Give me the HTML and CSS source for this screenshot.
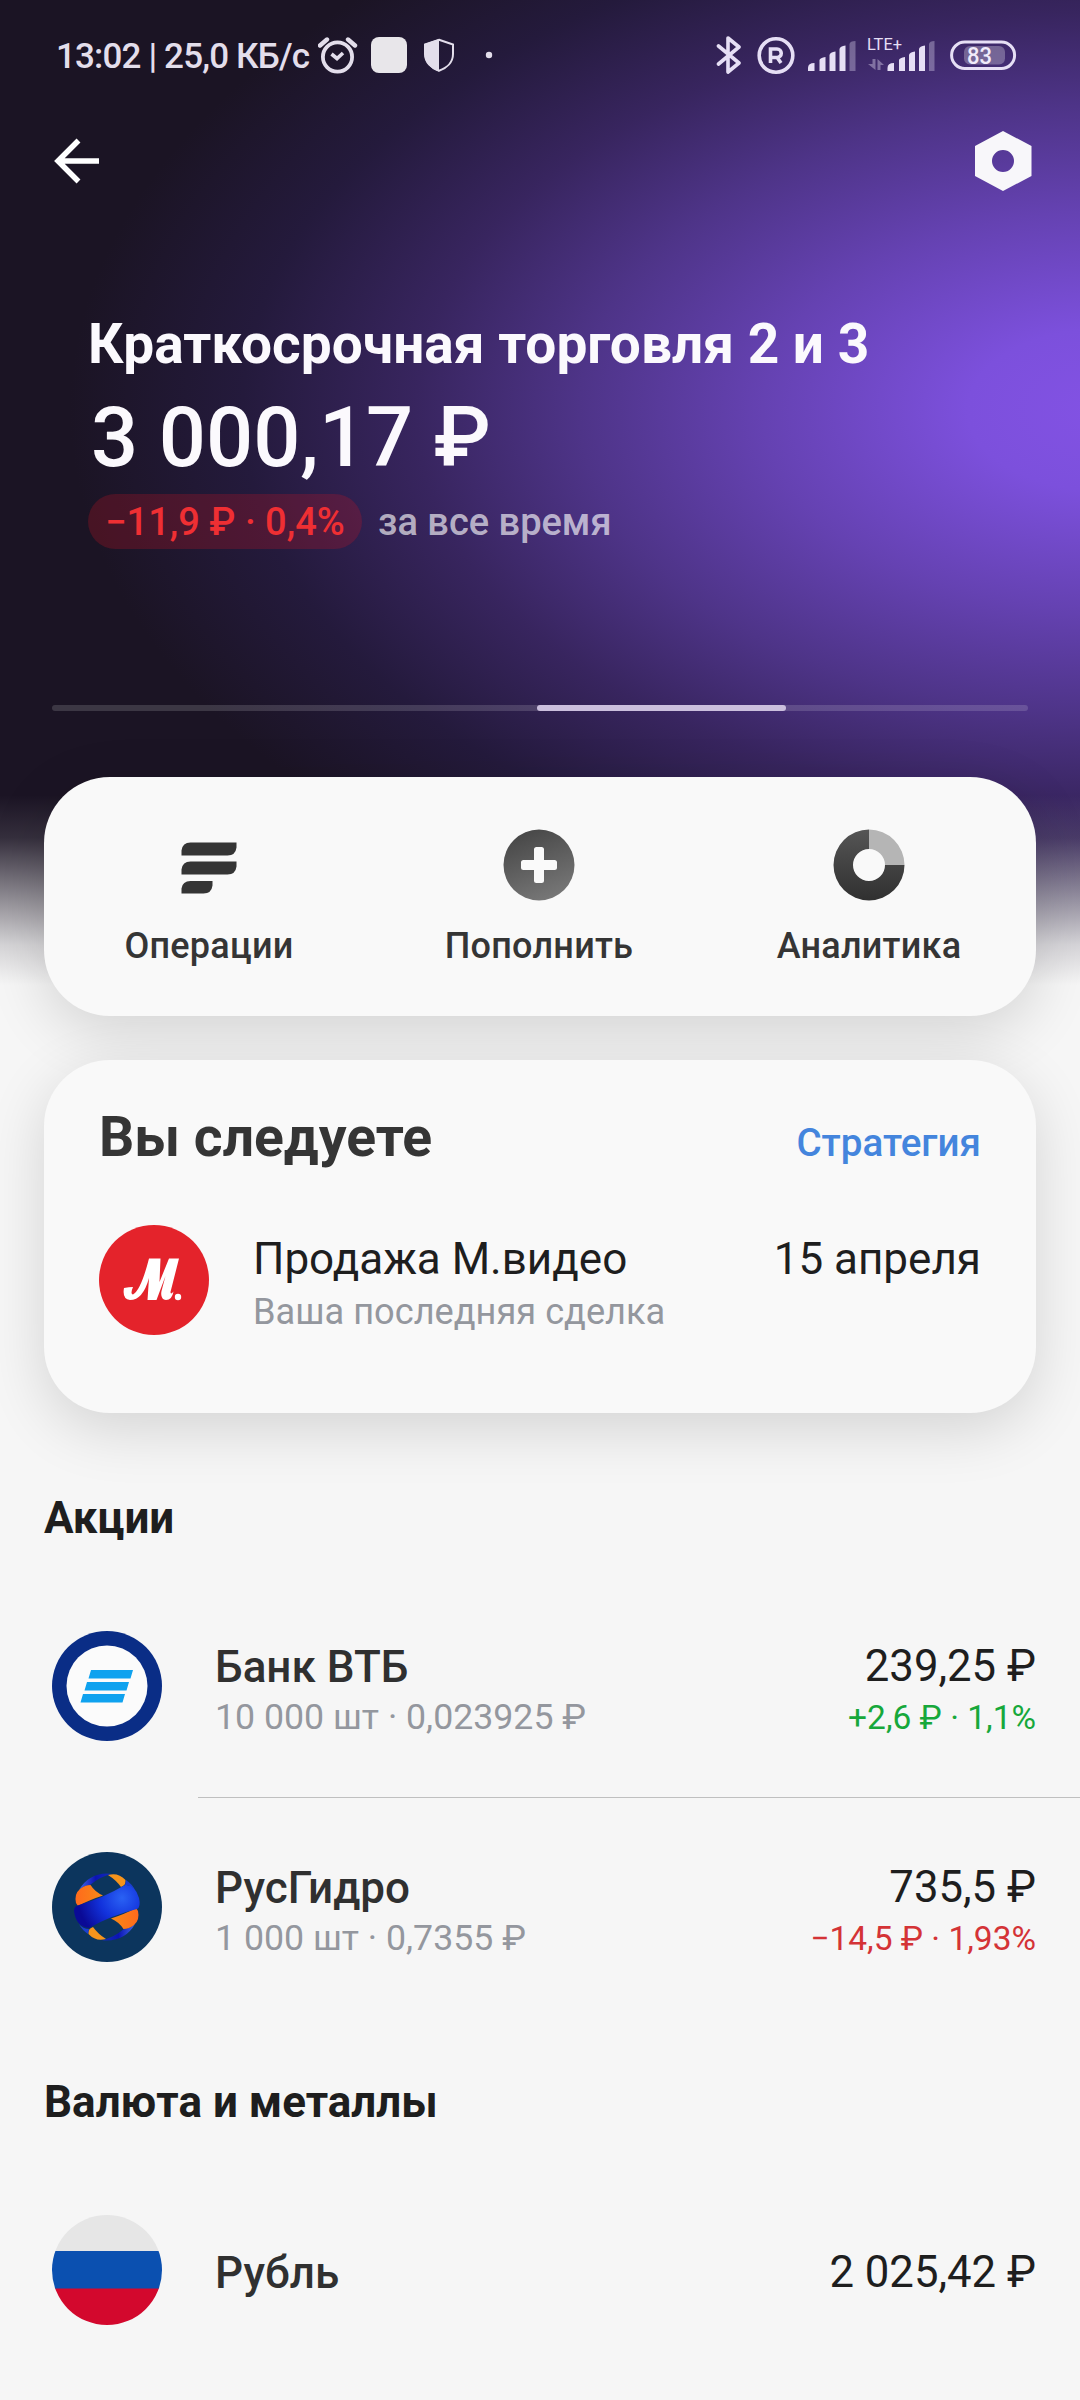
FILE: index.html
```
<!DOCTYPE html>
<html lang="ru">
<head>
<meta charset="utf-8">
<title>Портфель</title>
<link rel="stylesheet" href="styles.css">
</head>
<body>
<div class="screen">
  <header class="hero">
    <div class="statusbar">
      <span class="clock">13:02 | 25,0 КБ/с</span>
      <svg class="status-left" width="176" height="44" viewBox="318 33 176 44">
        <circle cx="337.500" cy="57" r="14.600" fill="none" stroke="#e3deeb" stroke-width="3.800"/>
        <path d="M320 45.500 L327 39.500 M355 45.500 L348 39.500" stroke="#e3deeb" stroke-width="4.400" stroke-linecap="round"/>
        <path d="M331.500 54 L337 58.500 L343 53" fill="none" stroke="#e3deeb" stroke-width="3.600"/>
        <rect x="371" y="37" width="36" height="36" rx="8" fill="#e8e6ea"/>
        <path d="M439 39.800 L453 44.500 V54 C453 62 447 68 439 70.800 C431 68 425 62 425 54 V44.500 Z" fill="none" stroke="#e3deeb" stroke-width="2"/>
        <path d="M439 39 L424.500 44 V54 C424.500 62.500 431 69 439 71.500 Z" fill="#e3deeb"/>
        <circle cx="489" cy="55" r="3.200" fill="#e3deeb"/>
      </svg>
      <svg class="status-right" width="302" height="44" viewBox="716 33 302 44">
        <g fill="none" stroke="#e6dff5" stroke-width="3.600" stroke-linejoin="round" stroke-linecap="round">
          <path d="M718.500 46 L739 63 L728 72 V38 L739 47 L718.500 64"/>
          <circle cx="776" cy="55.500" r="16.800"/>
          <path d="M770.500 63 V49 H777 A4 4 0 0 1 777 57.500 H771 M777.500 58 L781 63" stroke-linejoin="miter" stroke-linecap="butt"/>
          <rect x="951.600" y="42" width="63" height="26.500" rx="13.200" stroke-width="3"/>
        </g>
        <rect x="964" y="46" width="41" height="18.500" rx="6" fill="#fff" fill-opacity=".28"/>
        <g fill="#e6dff5">
          <path id="bars" d="M808 71 V68 Q808 63 814.500 63 V71 Z M819.500 71 V60 Q820 58 825.500 57 V71 Z M829.500 71 V55 Q830 52 835.500 51.500 V71 Z M839.500 71 V49 Q840 46 845.500 45.500 V71 Z"/>
          <path d="M849.500 71 V44 Q850 41 855.500 41 V71 Z" opacity=".35"/>
          <use href="#bars" x="79.500"/>
          <path d="M929 71 V44 Q929.500 41 934.500 41 V71 Z" opacity=".35"/>
          <path d="M872.500 59 H875.500 V70 L868 64 H872.500 Z M877.500 70 V59 L884 65 H880.500 V70 Z" opacity=".4"/>
        </g>
        <text x="867" y="50" class="lte" textLength="35" lengthAdjust="spacingAndGlyphs">LTE+</text>
        <text x="967" y="63.500" class="battery" textLength="25" lengthAdjust="spacingAndGlyphs">83</text>
      </svg>
    </div>
    <nav class="toolbar">
      <svg width="46" height="62" viewBox="54 130 46 62"><path d="M99 161 H58 M78.500 140.500 L58 161 L78.500 181.500" fill="none" stroke="#fff" stroke-width="5.500"/></svg>
      <svg width="58" height="62" viewBox="974 130 58 62"><path fill-rule="evenodd" fill="#f8f7fa" d="M1003 131 L1031.500 146 V176 L1003 191 L975 176 V146 Z M1003 150 A11 11 0 1 0 1003 172 A11 11 0 1 0 1003 150 Z"/></svg>
    </nav>
    <div class="summary">
      <h1>Краткосрочная торговля 2 и 3</h1>
      <div class="amount">3 000,17 ₽</div>
      <div class="change"><span class="pill">−11,9 ₽ · 0,4%</span><span class="period">за все время</span></div>
    </div>
    <div class="pager"><span class="pager-active"></span></div>
  </header>

  <section class="card actions">
    <div class="action">
      <svg width="72" height="72" viewBox="172.500 828.500 72 72" fill="#353535"><path d="M181 855 V850 Q182 842 190 842 H236 V847 Q235 855 227 855 Z M181 874 V869 Q182 861 190 861 H236 V866 Q235 874 227 874 Z M181 893 V888 Q182 880.500 190 880.500 H212 V885 Q211 893 203 893 Z"/></svg>
      <span>Операции</span>
    </div>
    <div class="action">
      <svg width="72" height="72" viewBox="0 0 72 72"><defs><linearGradient id="g1" x1=".2" y1="0" x2=".6" y2="1"><stop stop-color="#454545"/><stop offset="1" stop-color="#777"/></linearGradient></defs><circle cx="36" cy="36" r="35.500" fill="url(#g1)"/><path d="M33.500 18 H38.500 Q41 18 41 20.500 V31 H51.500 Q54 31 54 33.500 V38.500 Q54 41 51.500 41 H41 V51.500 Q41 54 38.500 54 H33.500 Q31 54 31 51.500 V41 H20.500 Q18 41 18 38.500 V33.500 Q18 31 20.500 31 H31 V20.500 Q31 18 33.500 18 Z" fill="#fafafa"/></svg>
      <span>Пополнить</span>
    </div>
    <div class="action">
      <svg width="72" height="72" viewBox="0 0 72 72"><defs><linearGradient id="g2" x1="0" y1="0" x2="0" y2="1"><stop stop-color="#555"/><stop offset="1" stop-color="#303030"/></linearGradient></defs><path d="M36 .5 A35.500 35.500 0 1 0 71.500 36 H52 A16 16 0 1 1 36 20 Z" fill="url(#g2)"/><path d="M36 .5 A35.500 35.500 0 0 1 71.500 36 H52 A16 16 0 0 0 36 20 Z" fill="#b5b5b5"/></svg>
      <span>Аналитика</span>
    </div>
  </section>

  <section class="card follow">
    <div class="follow-head"><h2>Вы следуете</h2><a class="link">Стратегия</a></div>
    <div class="deal">
      <svg width="110" height="110" viewBox="0 0 110 110"><circle cx="55" cy="55" r="55" fill="#e4232b"/><path d="M50 33.500 H61.500 L60.500 57 L70 33.500 H80 L71.500 67 Q71.500 70 74.500 66.500 Q73 75 67 75 Q61 74 62.500 66 L66.500 51 L57.500 75 H48.500 L50 53 Q44 75 31 75 Q23 74 25 63 Q30 62 34 62 Q31 69 34 69.500 Q42 65 50 33.500 Z" fill="#fff"/><circle cx="79" cy="72" r="3.200" fill="#fff"/></svg>
      <div class="deal-text"><div class="deal-name">Продажа М.видео</div><div class="sub">Ваша последняя сделка</div></div>
      <div class="deal-date">15 апреля</div>
    </div>
  </section>

  <h3 class="group">Акции</h3>
  <div class="asset">
    <svg width="110" height="110" viewBox="0 0 110 110"><circle cx="55" cy="55" r="55" fill="#0a2d86"/><circle cx="55" cy="55" r="40.500" fill="#fbfbfb"/><path d="M39 39 H81 L78.500 47.500 H36.500 Z M35 51 H77 L74.500 59.500 H32.500 Z M31 63 H73 L70.500 71.500 H28.500 Z" fill="#0fa2ef"/></svg>
    <div class="asset-text"><div class="name">Банк ВТБ</div><div class="sub">10 000 шт · 0,023925 ₽</div></div>
    <div class="asset-value"><div class="price">239,25 ₽</div><div class="delta up">+2,6 ₽ · 1,1%</div></div>
  </div>
  <div class="divider"></div>
  <div class="asset">
    <svg width="110" height="110" viewBox="0 0 110 110">
      <defs>
        <radialGradient id="band" gradientUnits="userSpaceOnUse" cx="70" cy="46" r="44"><stop stop-color="#2a62f4"/><stop offset=".5" stop-color="#1232dc"/><stop offset="1" stop-color="#0a0a96"/></radialGradient>
        <linearGradient id="rim" x1="0" y1="0" x2="1" y2="0"><stop stop-color="#3f68e8"/><stop offset=".5" stop-color="#0c14b4"/><stop offset="1" stop-color="#1230b8"/></linearGradient>
        <linearGradient id="orange" x1="0" y1="0" x2="1" y2="0"><stop stop-color="#ff6a1c"/><stop offset="1" stop-color="#f78a17"/></linearGradient>
      </defs>
      <circle cx="55" cy="55" r="55" fill="#0c355d"/>
      <g id="cap">
        <path d="M27 38 Q36 22 55 21.500 Q58 21.500 60 22 Q49 24 38 33 Q31 34 27 38 Z" fill="url(#rim)"/>
        <path d="M56 23 Q66 20 73.500 28 Q74.500 33 69 35 Q64 28 56 23 Z" fill="#f7941c"/>
        <path d="M24 51 Q22 42 28 37 Q33 33 38.500 33 Q43 40 51 43.500 Q37 48 26 54 Z" fill="url(#orange)"/>
        <path d="M74 28 Q80 32 83 38 Q79 33 73 33 Z" fill="#1a3fd0"/>
      </g>
      <use href="#cap" transform="rotate(180 55 55)"/>
      <path d="M22 59 Q22 54 27 53 Q51 46 73 33 Q83 32 87 46 Q89 55 85 57 Q60 63 37 76 Q24 75 22 59 Z" fill="url(#band)"/>
    </svg>
    <div class="asset-text"><div class="name">РусГидро</div><div class="sub">1 000 шт · 0,7355 ₽</div></div>
    <div class="asset-value"><div class="price">735,5 ₽</div><div class="delta down">−14,5 ₽ · 1,93%</div></div>
  </div>

  <h3 class="group second">Валюта и металлы</h3>
  <div class="asset single">
    <svg width="110" height="110" viewBox="0 0 110 110"><defs><clipPath id="c"><circle cx="55" cy="55" r="55"/></clipPath></defs><g clip-path="url(#c)"><path fill="#e6e6e6" d="M0 0H110V37H0Z"/><path fill="#0b50b0" d="M0 36H110V74H0Z"/><path fill="#d3082d" d="M0 73.500H110V110H0Z"/></g></svg>
    <div class="asset-text"><div class="name">Рубль</div></div>
    <div class="asset-value"><div class="price">2 025,42 ₽</div></div>
  </div>
</div>
</body>
</html>
```
FILE: styles.css
```
* { box-sizing: border-box; margin: 0; }
body { width: 1080px; font-family: Roboto, "Noto Sans", sans-serif; background: #f6f6f6; color: #1e1e1e; }
.screen { height: 2400px; overflow: hidden; display: flex; flex-direction: column;
  background:
    linear-gradient(180deg, rgba(246,246,246,0) 795px, rgba(246,246,246,.12) 838px, rgba(246,246,246,.48) 890px, rgba(246,246,246,.85) 945px, #f6f6f6 985px),
    radial-gradient(ellipse 1020px 585px at 1110px 410px, #8352e4 0%, #7c50dc 14%, #6542b2 34%, #4e3488 52%, #38255f 68%, #241a3c 85%, #1b1424 102%); }
.hero { height: 777px; flex: none; display: flex; flex-direction: column; }
svg { display: block; flex: none; }
.statusbar { height: 110px; padding: 33px 62px 33px 56px; display: flex; color: #e3deeb; }
.clock { width: 262px; font-size: 35px; font-weight: 500; line-height: 48px; letter-spacing: -.85px; white-space: nowrap; }
.status-right { margin-left: auto; }
.lte { font-size: 17px; fill: #e6dff5; }
.battery { font-size: 23px; font-weight: 500; fill: #f0ebfa; }
.toolbar { height: 102px; padding: 20px 48px 0 54px; display: flex; justify-content: space-between; }
.summary { height: 493px; padding: 97px 0 0 88px; color: #fbf9fd; white-space: nowrap; }
h1 { font-size: 55px; line-height: 70px; font-weight: 700; }
.amount { font-size: 83px; line-height: 100px; font-weight: 500; margin-top: 9px; padding-left: 3px; }
.change { display: flex; align-items: center; gap: 16px; margin-top: 6px; height: 55px; font-size: 38px; font-weight: 500; }
.pill { width: 274px; height: 55px; line-height: 57px; border-radius: 28px; text-align: center; color: #ef2f33; background: rgba(205,20,35,.25); }
.period { color: rgba(255,255,255,.65); }
.pager { margin: 0 52px; height: 6px; border-radius: 3px; background: rgba(255,255,255,.15); }
.pager-active { display: block; width: 249px; height: 6px; margin-left: 485px; border-radius: 3px; background: #cbbfdd; }
.card { margin: 0 44px; flex: none; border-radius: 66px; background: #f9f9f9; box-shadow: 0 16px 60px rgba(0,0,0,.14); }
.actions { height: 239px; display: grid; grid-template-columns: repeat(3, 1fr); padding: 52px 2px 0 0; }
.action { display: flex; flex-direction: column; align-items: center; gap: 25px; font-size: 36px; line-height: 41px; letter-spacing: .25px; font-weight: 500; color: #353535; }
.action svg { margin-right: 1px; }
.follow { height: 353px; margin-top: 44px; padding: 42px 55px 0; }
.follow-head { display: flex; justify-content: space-between; align-items: baseline; }
h2 { font-size: 55.300px; line-height: 72px; color: #353535; font-weight: 700; }
.link { font-size: 38.600px; font-weight: 500; color: #4485dd; }
.deal { display: flex; margin-top: 51px; }
.deal-text { margin-left: 44px; padding-top: 8px; }
.deal-name, .deal-date { font-size: 44px; line-height: 52px; }
.deal-date { margin-left: auto; padding-top: 8px; }
.sub { font-size: 35.700px; line-height: 42px; margin-top: 3px; color: #94979e; }
.deal .sub { font-size: 36.200px; margin-top: 6px; }
.group { font-size: 44px; line-height: 52px; font-weight: 700; margin: 79px 0 1px 44px; height: 52px; }
.asset { display: flex; margin: 86px 44px 0 52px; height: 110px; flex: none; }
.asset-text { margin-left: 53px; padding-top: 10px; }
.asset-value { margin-left: auto; padding-top: 9px; text-align: right; }
.single .asset-text { padding-top: 32px; }
.single .asset-value { padding-top: 31px; }
.name { font-size: 44px; line-height: 52px; font-weight: 500; color: #303030; }
.price { font-size: 43.700px; line-height: 52px; }
.delta { font-size: 33.500px; line-height: 42px; margin-top: 5px; }
.up { color: #17a83b; }
.down { color: #d43336; }
.divider { margin: 56px 0 -32px 198px; height: 1px; background: #bfbfbf; flex: none; }
.group.second { margin-top: 114px; }
```
